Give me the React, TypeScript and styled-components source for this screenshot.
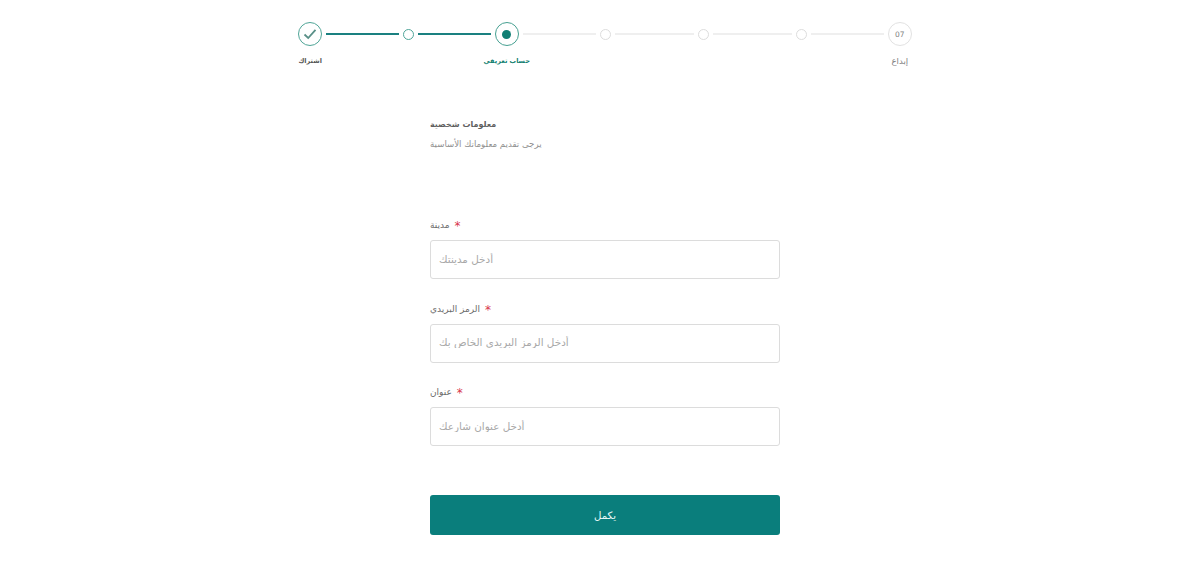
import styled, { createGlobalStyle } from 'styled-components';

type StepState = 'done' | 'passed' | 'current' | 'idle' | 'last';

const steps: { state: StepState; label?: string; lineBefore?: boolean; lineAfter?: boolean }[] = [
	{ state: 'done', label: 'اشتراك', lineAfter: true },
	{ state: 'passed', lineBefore: true, lineAfter: true },
	{ state: 'current', label: 'حساب تعريفي', lineBefore: true },
	{ state: 'idle' },
	{ state: 'idle' },
	{ state: 'idle' },
	{ state: 'last', label: 'إبداع' },
];

const fields = [
	{ label: 'مدينة', placeholder: 'أدخل مدينتك' },
	{ label: 'الرمز البريدي', placeholder: 'أدخل الرمز البريدي الخاص بك' },
	{ label: 'عنوان', placeholder: 'أدخل عنوان شارعك' },
];

const StepCircle = ({ state }: { state: StepState }) => {
	if (state === 'done') {
		return (
			<BigCircle $color='#4fa597'>
				<svg width='14' height='12' viewBox='0 0 14 12' fill='none'>
					<path d='M1.5 6.5 L5.2 10 L12.5 1.8' stroke='#5a9088' strokeWidth='1.8' />
				</svg>
			</BigCircle>
		);
	}
	if (state === 'current') {
		return (
			<BigCircle $color='#46a091'>
				<InnerDot />
			</BigCircle>
		);
	}
	if (state === 'last') {
		return <BigCircle $color='#e2e2e2'>07</BigCircle>;
	}
	return <SmallCircle $active={state === 'passed'} />;
};

export default function App() {
	return (
		<>
			<GlobalStyle />
			<Page>
				<Stepper>
					{steps.map((step, i) => (
						<Step key={i}>
							<Track>
								<Line $active={!!step.lineBefore} $hidden={i === 0} $side='before' />
								<StepCircle state={step.state} />
								<Line $active={!!step.lineAfter} $hidden={i === steps.length - 1} $side='after' />
							</Track>
							<StepLabel $state={step.state}>{step.label}</StepLabel>
						</Step>
					))}
				</Stepper>
				<Form>
					<Title>معلومات شخصية</Title>
					<Subtitle>يرجى تقديم معلوماتك الأساسية</Subtitle>
					<Fields>
						{fields.map((field) => (
							<Field key={field.label}>
								<FieldLabel>
									{field.label}
									<Star>*</Star>
								</FieldLabel>
								<Input placeholder={field.placeholder} />
							</Field>
						))}
					</Fields>
					<Submit type='button'>يكمل</Submit>
				</Form>
			</Page>
		</>
	);
}

const GlobalStyle = createGlobalStyle`
	html, body {
		margin: 0;
		background: #ffffff;
	}
	body {
		font-family: 'DejaVu Sans', 'Noto Sans', sans-serif;
	}
`;

const Page = styled.main`
	box-sizing: border-box;
	width: 1200px;
	height: 588px;
	padding: 22px 0 0 10px;
	display: flex;
	flex-direction: column;
	align-items: center;
	overflow: hidden;
`;

const Stepper = styled.ol`
	list-style: none;
	margin: 0;
	padding: 0;
	width: 688px;
	display: grid;
	grid-template-columns: repeat(7, 1fr);
`;

const Step = styled.li`
	display: flex;
	flex-direction: column;
	align-items: center;
`;

const Track = styled.div`
	width: 100%;
	height: 24px;
	display: flex;
	align-items: center;
`;

const Line = styled.span<{ $active: boolean; $hidden: boolean; $side: 'before' | 'after' }>`
	flex: 1;
	height: 2px;
	background: ${({ $active }) => ($active ? '#1a8080' : '#efefef')};
	visibility: ${({ $hidden }) => ($hidden ? 'hidden' : 'visible')};
	margin: ${({ $side }) => ($side === 'before' ? '0 4px 0 0' : '0 0 0 4px')};
`;

const BigCircle = styled.div<{ $color: string }>`
	box-sizing: border-box;
	flex: none;
	width: 24px;
	height: 24px;
	border-radius: 50%;
	border: 1.5px solid ${({ $color }) => $color};
	display: flex;
	align-items: center;
	justify-content: center;
	font-size: 7.5px;
	color: #808080;
	background: #ffffff;
`;

const InnerDot = styled.span`
	width: 9px;
	height: 9px;
	border-radius: 50%;
	background: #117f74;
`;

const SmallCircle = styled.div<{ $active: boolean }>`
	box-sizing: border-box;
	flex: none;
	width: 11px;
	height: 11px;
	border-radius: 50%;
	border: 1.5px solid ${({ $active }) => ($active ? '#4fa599' : '#dddddd')};
`;

const StepLabel = styled.span<{ $state: StepState }>`
	margin-top: 8px;
	height: 14px;
	line-height: 14px;
	font-size: ${({ $state }) => ($state === 'last' ? '8.5px' : '6.5px')};
	font-weight: ${({ $state }) => ($state === 'last' ? 400 : 700)};
	color: ${({ $state }) =>
		$state === 'current' ? '#127f70' : $state === 'last' ? '#808080' : '#555555'};
`;

const Form = styled.form`
	width: 350px;
	margin-top: 49px;
	display: flex;
	flex-direction: column;
`;

const Title = styled.h2`
	margin: 0;
	height: 16px;
	line-height: 16px;
	font-size: 8px;
	font-weight: 700;
	color: #5f5f5f;
`;

const Subtitle = styled.p`
	margin: 3px 0 0;
	height: 16px;
	line-height: 16px;
	font-size: 8.6px;
	color: #8f8f8f;
`;

const Fields = styled.div`
	margin-top: 66px;
	display: flex;
	flex-direction: column;
	gap: 22.5px;
`;

const Field = styled.label`
	display: flex;
	flex-direction: column;
	gap: 8px;
`;

const FieldLabel = styled.span`
	height: 14px;
	line-height: 14px;
	font-size: 9px;
	color: #6b6b6b;
`;

const Star = styled.span`
	margin-left: 5px;
	color: #d8354c;
	font-size: 12px;
	vertical-align: -2px;
`;

const Input = styled.input`
	box-sizing: border-box;
	width: 100%;
	height: 39px;
	padding: 0 8px 2px;
	border: 1px solid #dcdcdc;
	border-radius: 3px;
	background: #ffffff;
	font-family: inherit;
	font-size: 10.4px;
	outline: none;
	&::placeholder {
		color: #a8a8a8;
		opacity: 1;
	}
`;

const Submit = styled.button`
	margin-top: 49px;
	height: 40px;
	border: 0;
	border-radius: 3px;
	background: #0a7e7c;
	color: #e8f7f6;
	font-family: inherit;
	font-size: 10.2px;
`;
